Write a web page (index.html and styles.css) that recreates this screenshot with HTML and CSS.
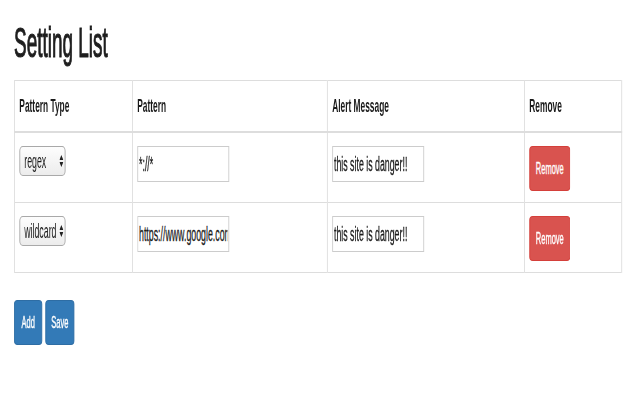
FILE: index.html
```html
<!DOCTYPE html>
<html lang="en">
<head>
    <meta charset="UTF-8">
    <meta name="viewport" content="width=device-width, initial-scale=1.0">
    <title>Setting List</title>
    <link rel="stylesheet" href="styles.css">
</head>
<body>
    <div class="page">
        <h1>Setting List</h1>
        <table class="settings">
            <thead>
                <tr>
                    <th class="col-type">Pattern Type</th>
                    <th class="col-pattern">Pattern</th>
                    <th class="col-message">Alert Message</th>
                    <th class="col-remove">Remove</th>
                </tr>
            </thead>
            <tbody>
                <tr>
                    <td>
                        <div class="select">
                            <select>
                                <option selected>regex</option>
                                <option>wildcard</option>
                            </select>
                            <svg class="arrows" viewBox="0 0 8 12" width="9" height="12" preserveAspectRatio="none"><path d="M0 5 L4 0 L8 5 Z M0 7 L8 7 L4 12 Z"/></svg>
                        </div>
                    </td>
                    <td><input type="text" value="*://*"></td>
                    <td><input type="text" value="this site is danger!!"></td>
                    <td><button type="button" class="btn btn-danger">Remove</button></td>
                </tr>
                <tr>
                    <td>
                        <div class="select">
                            <select>
                                <option>regex</option>
                                <option selected>wildcard</option>
                            </select>
                            <svg class="arrows" viewBox="0 0 8 12" width="9" height="12" preserveAspectRatio="none"><path d="M0 5 L4 0 L8 5 Z M0 7 L8 7 L4 12 Z"/></svg>
                        </div>
                    </td>
                    <td><input type="text" value="https://www.google.com/*"></td>
                    <td><input type="text" value="this site is danger!!"></td>
                    <td><button type="button" class="btn btn-danger">Remove</button></td>
                </tr>
            </tbody>
        </table>
        <div class="actions">
            <button type="button" class="btn btn-primary btn-add">Add</button>
            <button type="button" class="btn btn-primary btn-save">Save</button>
        </div>
    </div>
</body>
</html>
```

FILE: styles.css
```css
html, body {
    margin: 0;
    padding: 0;
    background: #fff;
    overflow: hidden;
}
/* the whole sheet is drawn narrow, as in the capture */
.page {
    width: 1455px;
    box-sizing: border-box;
    padding: 18px 32px;
    font-family: 'Liberation Sans', Arial, sans-serif;
    color: #333;
    transform: scaleX(0.44);
    transform-origin: 0 0;
}
h1 {
    margin: 0 0 14px;
    font-size: 43px;
    line-height: 48px;
    font-weight: normal;
    color: #1e1e1e;
    -webkit-text-stroke: 1.2px #1e1e1e;
}
.settings {
    width: 1382px;
    table-layout: fixed;
    border-collapse: collapse;
}
.settings th,
.settings td {
    border: 1px solid #ddd;
    border-left-width: 2px;
    border-right-width: 2px;
    text-align: left;
    vertical-align: top;
}
.settings th {
    padding: 14px 10px 14px;
    font-size: 19px;
    line-height: 22px;
    font-weight: bold;
    color: #1a1a1a;
    border-bottom-width: 2px;
}
.settings td {
    padding: 13px 10px 11px;
}
.col-type { width: 246px; }
.col-pattern { width: 421px; }
.col-message { width: 426px; }
.select {
    position: relative;
    width: 105px;
}
.select select {
    appearance: none;
    -webkit-appearance: none;
    width: 105px;
    height: 30px;
    margin: 0;
    padding: 0 0 0 9px;
    border: 1px solid #a9a9a9;
    border-left-width: 2px;
    border-right-width: 2px;
    border-radius: 8px / 5px;
    background: linear-gradient(#fdfdfd, #ececec);
    font-family: 'Liberation Sans', Arial, sans-serif;
    font-size: 20px;
    color: #1a1a1a;
}
.arrows {
    position: absolute;
    right: 5px;
    top: 9px;
    fill: #222;
    pointer-events: none;
}
input[type="text"] {
    width: 209px;
    height: 36px;
    box-sizing: border-box;
    margin: 0;
    padding: 0 2px;
    border: 1px solid #ccc;
    border-left-width: 2px;
    border-right-width: 2px;
    font-family: 'Liberation Sans', Arial, sans-serif;
    font-size: 20px;
    color: #1a1a1a;
    -webkit-text-stroke: 0.3px #1a1a1a;
}
.btn {
    height: 45px;
    margin: 0;
    padding: 0;
    border: 1px solid;
    border-left-width: 2px;
    border-right-width: 2px;
    border-radius: 8px / 4px;
    color: #fff;
    font-family: 'Liberation Sans', Arial, sans-serif;
    font-size: 17px;
    -webkit-text-stroke: 0.4px #fff;
    cursor: pointer;
}
.btn-danger {
    width: 93px;
    background: #d9534f;
    border-color: #d43f3a;
}
.btn-primary {
    background: #337ab7;
    border-color: #2e6da4;
}
.btn-add { width: 64px; }
.btn-save { width: 66px; }
.actions {
    display: flex;
    gap: 7px;
    margin-top: 27px;
}
```
